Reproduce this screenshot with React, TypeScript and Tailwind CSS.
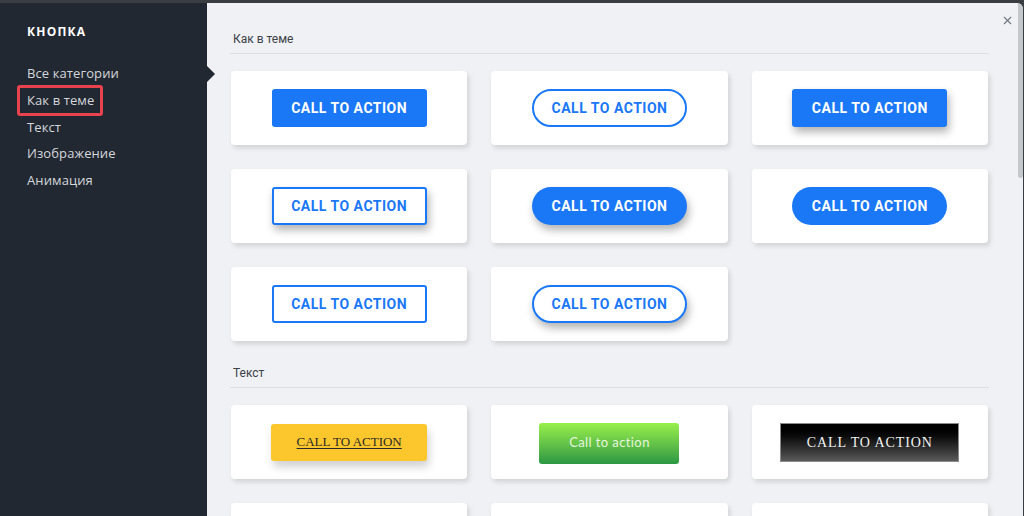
import { X } from "lucide-react"

const menu = ["Все категории", "Как в теме", "Текст", "Изображение", "Анимация"]

const base =
  "w-[155px] h-[38px] flex items-center justify-center text-[14px] font-bold tracking-[0.5px] [font-family:Roboto,sans-serif]"

const themeButtons = [
  `${base} rounded-[3px] bg-[#1a78f6] text-white`,
  `${base} rounded-full border-2 border-[#1a78f6] bg-white text-[#1a78f6]`,
  `${base} rounded-[3px] bg-[#1a78f6] text-white shadow-[2px_5px_8px_rgba(0,0,0,0.3)]`,
  `${base} rounded-[3px] border-2 border-[#1a78f6] bg-white text-[#1a78f6] shadow-[2px_5px_8px_rgba(0,0,0,0.3)]`,
  `${base} rounded-full bg-[#1a78f6] text-white shadow-[2px_5px_8px_rgba(0,0,0,0.3)]`,
  `${base} rounded-full bg-[#1a78f6] text-white`,
  `${base} rounded-[3px] border-2 border-[#1a78f6] bg-white text-[#1a78f6]`,
  `${base} rounded-full border-2 border-[#1a78f6] bg-white text-[#1a78f6] shadow-[2px_5px_8px_rgba(0,0,0,0.3)]`,
]

function Card({ children }: { children: React.ReactNode }) {
  return (
    <div className="h-[74px] bg-white rounded-[4px] flex items-center justify-center shadow-[2px_3px_5px_rgba(0,0,0,0.13)]">
      {children}
    </div>
  )
}

function SectionTitle({ title }: { title: string }) {
  return (
    <div className="text-[12px] leading-[16px] text-[#3d4148] pb-[6px] pl-[3px] border-b border-[#dcdfe4] [font-family:Roboto,sans-serif]">
      {title}
    </div>
  )
}

export default function App() {
  return (
    <div className="w-[1024px] h-[516px] bg-[#3a3d42] flex flex-col overflow-hidden [font-family:'Open_Sans',sans-serif]">
      <div className="h-[3px] shrink-0" />
      <div className="flex flex-1 min-h-0">
        {/* Sidebar */}
        <aside className="w-[207px] shrink-0 bg-[#222831] pl-[27px] pt-[21px]">
          <div className="text-[12px] leading-[16px] font-bold tracking-[1.2px] text-white">КНОПКА</div>
          <ul className="mt-[20px]">
            {menu.map((item) => (
              <li key={item} className="h-[26.75px] leading-[26.75px] text-[13px] text-[#d4d7dc] tracking-[0.1px]">
                <span className="relative inline-block">
                  {item}
                  {item === "Как в теме" && (
                    <span className="absolute -left-[10px] -right-[9px] -top-[2px] -bottom-[2px] border-[3px] border-[#e8424f] rounded-[3px]" />
                  )}
                </span>
              </li>
            ))}
          </ul>
        </aside>

        {/* Main panel */}
        <main className="relative flex-1 bg-[#eff1f4] rounded-tr-[6px] mr-[1px] overflow-hidden">
          <div className="absolute left-0 top-[63px] w-0 h-0 border-y-[8px] border-y-transparent border-l-[8px] border-l-[#222831]" />
          <X className="absolute right-[9px] top-[11px] text-[#70767e]" size={13} strokeWidth={2} />
          <div className="absolute right-0 top-0 w-[5px] h-[175px] bg-[#c4c7cb] rounded-b-[3px]" />

          <div className="pl-[23px] pr-[28px] pt-[28px] w-[810px]">
            <SectionTitle title="Как в теме" />
            <div className="grid grid-cols-3 gap-x-[24px] gap-y-[24px] mt-[17px] px-[1px]">
              {themeButtons.map((cls, i) => (
                <Card key={i}>
                  <div className={cls}>CALL TO ACTION</div>
                </Card>
              ))}
            </div>

            <div className="mt-[24px]">
              <SectionTitle title="Текст" />
            </div>
            <div className="grid grid-cols-3 gap-x-[24px] gap-y-[24px] mt-[17px] px-[1px]">
              <Card>
                <div className="w-[156px] h-[37px] rounded-[3px] bg-[#fcc72c] flex items-center justify-center text-[13px] text-[#2a2a2a] underline underline-offset-2 shadow-[2px_6px_8px_rgba(0,0,0,0.18)] [font-family:'Liberation_Serif',serif]">
                  CALL TO ACTION
                </div>
              </Card>
              <Card>
                <div className="w-[140px] h-[41px] mt-[2px] rounded-[3px] bg-gradient-to-b from-[#98f04a] to-[#2a9843] flex items-center justify-center text-[13px] text-[#e6f6de] tracking-[0.4px] [font-family:Lato,sans-serif]">
                  Call to action
                </div>
              </Card>
              <Card>
                <div className="w-[179px] h-[39px] border border-[#8a8a8a] bg-gradient-to-b from-[#000000] to-[#5a5a5a] flex items-center justify-center text-[14px] text-[#f2f2f2] tracking-[0.9px] [font-family:'Liberation_Serif',serif]">
                  CALL TO ACTION
                </div>
              </Card>
              <Card>{null}</Card>
              <Card>{null}</Card>
              <Card>{null}</Card>
            </div>
          </div>
        </main>
      </div>
    </div>
  )
}
